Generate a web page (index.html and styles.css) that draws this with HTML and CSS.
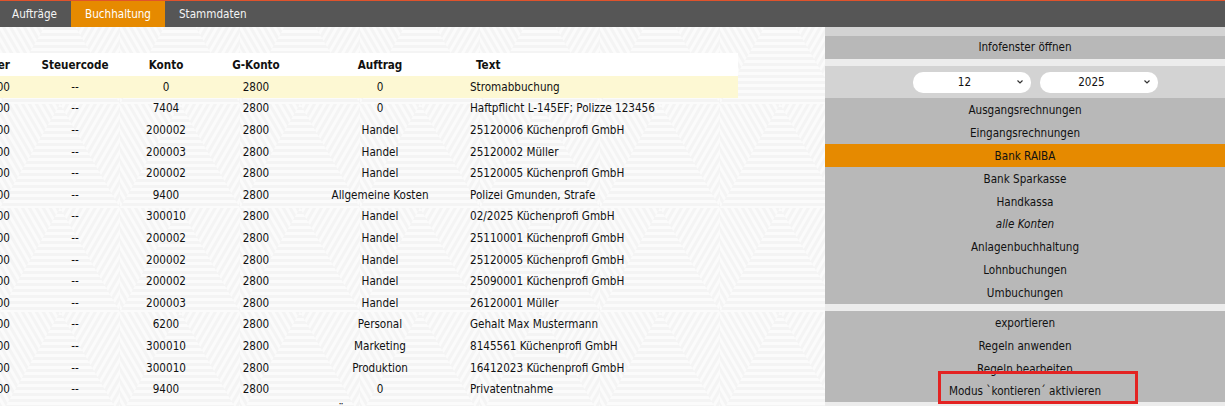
FILE: index.html
```html
<!DOCTYPE html>
<html lang="de">
<head>
<meta charset="utf-8">
<title>Buchhaltung</title>
<link rel="stylesheet" href="styles.css">
</head>
<body>
<header class="topbar">
  <nav class="tabs">
    <a class="tab">Aufträge</a>
    <a class="tab active">Buchhaltung</a>
    <a class="tab">Stammdaten</a>
  </nav>
</header>
<div class="layout">
  <main class="content">
    <div class="table-wrap">
      <table class="journal">
        <colgroup>
          <col class="c-nr"><col class="c-st"><col class="c-ko"><col class="c-gk"><col class="c-au"><col class="c-tx">
        </colgroup>
        <thead>
          <tr><th class="nr">Nummer</th><th>Steuercode</th><th>Konto</th><th>G-Konto</th><th>Auftrag</th><th class="tx">Text</th></tr>
        </thead>
        <tbody>
          <tr class="selected"><td class="nr">1.200,00</td><td>--</td><td>0</td><td>2800</td><td>0</td><td class="tx">Stromabbuchung</td></tr>
          <tr><td class="nr">1.200,00</td><td>--</td><td>7404</td><td>2800</td><td>0</td><td class="tx">Haftpflicht L-145EF; Polizze 123456</td></tr>
          <tr><td class="nr">1.200,00</td><td>--</td><td>200002</td><td>2800</td><td>Handel</td><td class="tx">25120006 Küchenprofi GmbH</td></tr>
          <tr><td class="nr">1.200,00</td><td>--</td><td>200003</td><td>2800</td><td>Handel</td><td class="tx">25120002 Müller</td></tr>
          <tr><td class="nr">1.200,00</td><td>--</td><td>200002</td><td>2800</td><td>Handel</td><td class="tx">25120005 Küchenprofi GmbH</td></tr>
          <tr><td class="nr">1.200,00</td><td>--</td><td>9400</td><td>2800</td><td>Allgemeine Kosten</td><td class="tx">Polizei Gmunden, Strafe</td></tr>
          <tr><td class="nr">1.200,00</td><td>--</td><td>300010</td><td>2800</td><td>Handel</td><td class="tx">02/2025 Küchenprofi GmbH</td></tr>
          <tr><td class="nr">1.200,00</td><td>--</td><td>200002</td><td>2800</td><td>Handel</td><td class="tx">25110001 Küchenprofi GmbH</td></tr>
          <tr><td class="nr">1.200,00</td><td>--</td><td>200002</td><td>2800</td><td>Handel</td><td class="tx">25120005 Küchenprofi GmbH</td></tr>
          <tr><td class="nr">1.200,00</td><td>--</td><td>200002</td><td>2800</td><td>Handel</td><td class="tx">25090001 Küchenprofi GmbH</td></tr>
          <tr><td class="nr">1.200,00</td><td>--</td><td>200003</td><td>2800</td><td>Handel</td><td class="tx">26120001 Müller</td></tr>
          <tr><td class="nr">1.200,00</td><td>--</td><td>6200</td><td>2800</td><td>Personal</td><td class="tx">Gehalt Max Mustermann</td></tr>
          <tr><td class="nr">1.200,00</td><td>--</td><td>300010</td><td>2800</td><td>Marketing</td><td class="tx">8145561 Küchenprofi GmbH</td></tr>
          <tr><td class="nr">1.200,00</td><td>--</td><td>300010</td><td>2800</td><td>Produktion</td><td class="tx">16412023 Küchenprofi GmbH</td></tr>
          <tr><td class="nr">1.200,00</td><td>--</td><td>9400</td><td>2800</td><td>0</td><td class="tx">Privatentnahme</td></tr>
          <tr><td class="nr">1.200,00</td><td>--</td><td>200002</td><td>2800</td><td>Übergangskonto</td><td class="tx">25120007 Küchenprofi GmbH</td></tr>
        </tbody>
      </table>
    </div>
  </main>
  <aside class="panel">
    <div class="strip"></div>
    <div class="btn">Infofenster öffnen</div>
    <div class="gap"></div>
    <div class="period">
      <select class="sel"><option>12</option></select>
      <select class="sel"><option>2025</option></select>
    </div>
    <ul class="menu">
      <li>Ausgangsrechnungen</li>
      <li>Eingangsrechnungen</li>
      <li class="active">Bank RAIBA</li>
      <li>Bank Sparkasse</li>
      <li>Handkassa</li>
      <li class="italic">alle Konten</li>
      <li>Anlagenbuchhaltung</li>
      <li>Lohnbuchungen</li>
      <li>Umbuchungen</li>
    </ul>
    <div class="gap"></div>
    <ul class="menu menu2">
      <li>exportieren</li>
      <li>Regeln anwenden</li>
      <li>Regeln bearbeiten</li>
      <li>Modus `kontieren´ aktivieren</li>
    </ul>
    <div class="highlight"></div>
  </aside>
</div>
</body>
</html>
```
FILE: styles.css
```css
html, body {
  margin: 0;
  padding: 0;
}
body {
  width: 1225px;
  height: 406px;
  overflow: hidden;
  font-family: "DejaVu Sans Condensed", "DejaVu Sans", sans-serif;
  font-size: 11.6px;
  color: #111;
  background-color: #f4f4f4;
  background-image: url("data:image/svg+xml;utf8,<svg xmlns='http://www.w3.org/2000/svg' width='120' height='104'><defs><pattern id='h' width='6' height='6' patternUnits='userSpaceOnUse'><rect width='6' height='3' fill='white'/></pattern><pattern id='a' width='6' height='6' patternUnits='userSpaceOnUse' patternTransform='rotate(60)'><rect width='6' height='3' fill='white'/></pattern><pattern id='b' width='6' height='6' patternUnits='userSpaceOnUse' patternTransform='rotate(-60)'><rect width='6' height='3' fill='white'/></pattern></defs><rect width='120' height='104' fill='%23f4f4f4'/><polygon points='0,104 60,0 120,104' fill='url(%23h)' opacity='0.6'/><polygon points='0,0 60,0 0,104' fill='url(%23a)' opacity='0.6'/><polygon points='60,0 120,0 120,104' fill='url(%23b)' opacity='0.6'/></svg>");
}

.topbar {
  height: 26px;
  background: #565656;
  border-top: 1px solid #e0532c;
}
.tabs {
  display: flex;
  height: 100%;
}
.tab {
  display: flex;
  align-items: center;
  padding: 0 14px 0 12px;
  color: #f4f4f4;
  font-size: 11.6px;
  cursor: pointer;
}
.tab.active {
  background: #e68a00;
  padding: 0 14px 0 14px;
  color: #fff;
}
.tab.active + .tab {
  padding-left: 14px;
}

.layout {
  display: flex;
  height: 379px;
}
.content {
  flex: 1;
  padding-top: 26px;
}
.table-wrap {
  width: 738px;
  overflow: hidden;
}
.journal {
  margin-left: -50px;
  width: 788px;
  table-layout: fixed;
  border-collapse: collapse;
}
.c-nr { width: 70px; }
.c-st { width: 110px; }
.c-ko { width: 72px; }
.c-gk { width: 108px; }
.c-au { width: 140px; }
.c-tx { width: 288px; }

.journal th,
.journal td {
  padding: 0;
  text-align: center;
  white-space: nowrap;
  overflow: hidden;
}
.journal thead tr {
  background: #fff;
  height: 23px;
}
.journal th {
  font-weight: bold;
  font-size: 11.6px;
}
.journal tbody tr {
  height: 21.6px;
}
.journal tr.selected {
  background: #fdf8d3;
}
.journal .nr {
  text-align: right;
  padding-right: 10px;
}
.journal .tx {
  text-align: left;
  padding-left: 20px;
}
.journal th.tx {
  padding-left: 26px;
}

.panel {
  position: relative;
  width: 400px;
  display: flex;
  flex-direction: column;
  background: #ececec;
  text-align: center;
}
.strip {
  height: 9px;
  background: #d3d3d3;
}
.btn {
  height: 23px;
  line-height: 23px;
  background: #b8b8b8;
}
.gap {
  height: 7px;
  background: #ececec;
}
.period {
  height: 32px;
  background: #d3d3d3;
  display: flex;
  justify-content: center;
  align-items: center;
  gap: 9px;
  padding-left: 20px;
}
.sel {
  appearance: none;
  -webkit-appearance: none;
  width: 118px;
  height: 21px;
  border: none;
  border-radius: 10px;
  background-color: #fff;
  background-image: url("data:image/svg+xml;utf8,<svg xmlns='http://www.w3.org/2000/svg' width='8' height='6'><path d='M1.5 1.5 L4 4 L6.5 1.5' fill='none' stroke='%23333' stroke-width='1.2'/></svg>");
  background-repeat: no-repeat;
  background-position: right 7px center;
  font-family: inherit;
  font-size: 11.6px;
  color: #111;
  text-align: center;
  text-align-last: center;
  padding: 0 14px 0 0;
}
.menu {
  list-style: none;
  margin: 0;
  padding: 0;
  background: #b8b8b8;
}
.menu li {
  height: 22.9px;
  line-height: 24px;
}
.menu li.active {
  background: #e68a00;
}
.menu li.italic {
  font-style: italic;
}
.menu2 li {
  height: 22.75px;
  line-height: 25px;
}
.highlight {
  position: absolute;
  left: 113px;
  top: 344px;
  width: 200px;
  height: 33px;
  box-sizing: border-box;
  border: 3px solid #e32322;
}
```
